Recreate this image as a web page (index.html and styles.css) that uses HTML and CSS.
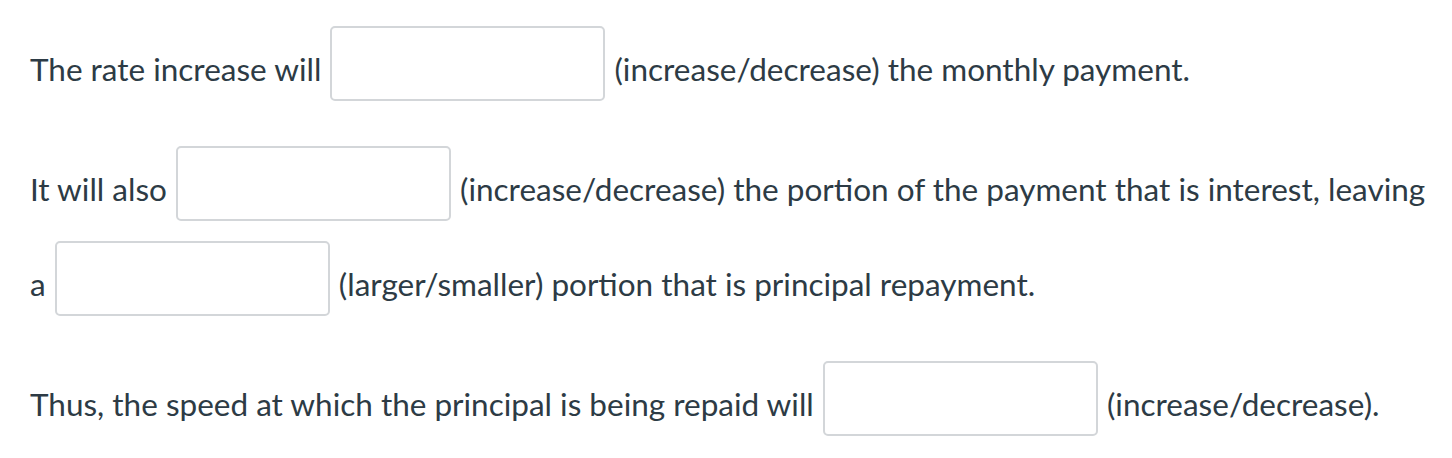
FILE: index.html
```html
<!DOCTYPE html>
<html lang="en">
<head>
<meta charset="utf-8">
<title>Rate increase question</title>
<link rel="stylesheet" href="styles.css">
</head>
<body>
<div class="question">
  <p class="line">The rate increase will <span class="blank"></span> (increase/decrease) the monthly payment.</p>
  <p class="line">It will also <span class="blank"></span> (increase/decrease) the portion of the payment that is interest, leaving<br>a <span class="blank"></span> (larger/smaller) portion that is principal repayment.</p>
  <p class="line">Thus, the speed at which the principal is being repaid will <span class="blank"></span> (increase/decrease).</p>
</div>
</body>
</html>
```

FILE: styles.css
```css
html, body {
  margin: 0;
  padding: 0;
  background: #ffffff;
}

.question {
  padding: 16px 10px 0 30px;
  font-family: Lato, "Open Sans", "Liberation Sans", sans-serif;
  font-size: 31.5px;
  color: #2d3b45;
  white-space: nowrap;
}

.line {
  margin: 0 0 25px 0;
  line-height: 36px;
}

.blank {
  display: inline-block;
  box-sizing: border-box;
  width: 275px;
  height: 75px;
  margin: 10px 1px;
  border: 2px solid #d3d6d9;
  border-radius: 5px;
  background: #ffffff;
  vertical-align: -30px;
}
```
